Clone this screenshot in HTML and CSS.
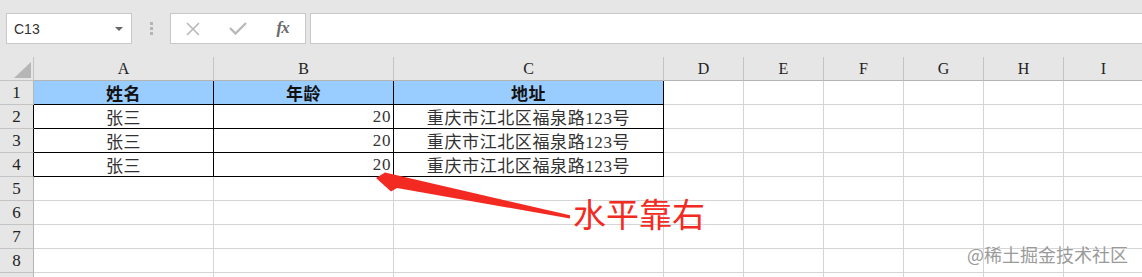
FILE: index.html
```html
<!DOCTYPE html>
<html lang="zh-CN">
<head>
  <meta charset="UTF-8" />
  <title>水平靠右</title>
  <link rel="stylesheet" href="styles.css">
</head>
<body>

  <div class="toolbar">
    <div class="namebox">
      <span>C13</span>
      <span class="caret"></span>
    </div>
    <div class="grip"><i></i><i></i><i></i></div>
    <div class="fx-buttons">
      <span class="btn">
        <svg width="16" height="14" viewBox="0 0 16 14"><path d="M2 1 L14 13 M14 1 L2 13" stroke="#b9b9b9" stroke-width="1.6" fill="none"/></svg>
      </span>
      <span class="btn">
        <svg width="18" height="13" viewBox="0 0 18 13"><path d="M1 6 L6.5 11.5 L17 1" stroke="#b9b9b9" stroke-width="2.4" fill="none"/></svg>
      </span>
      <span class="btn fx">fx</span>
    </div>
    <div class="formula"></div>
  </div>

  <div class="sheet">
    <div class="grid">
      <!-- column headers -->
      <div class="cell corner"><span class="select-all"></span></div>
      <div class="cell colhead">A</div>
      <div class="cell colhead">B</div>
      <div class="cell colhead">C</div>
      <div class="cell colhead">D</div>
      <div class="cell colhead">E</div>
      <div class="cell colhead">F</div>
      <div class="cell colhead">G</div>
      <div class="cell colhead">H</div>
      <div class="cell colhead">I</div>

      <!-- row 1 -->
      <div class="cell rowhead">1</div>
      <div class="cell data title center">姓名</div>
      <div class="cell data title center">年龄</div>
      <div class="cell data title center">地址</div>
      <div class="cell"></div><div class="cell"></div><div class="cell"></div><div class="cell"></div><div class="cell"></div><div class="cell"></div>

      <!-- row 2 -->
      <div class="cell rowhead edge">2</div>
      <div class="cell data center">张三</div>
      <div class="cell data right">20</div>
      <div class="cell data center">重庆市江北区福泉路123号</div>
      <div class="cell"></div><div class="cell"></div><div class="cell"></div><div class="cell"></div><div class="cell"></div><div class="cell"></div>

      <!-- row 3 -->
      <div class="cell rowhead edge">3</div>
      <div class="cell data center">张三</div>
      <div class="cell data right">20</div>
      <div class="cell data center">重庆市江北区福泉路123号</div>
      <div class="cell"></div><div class="cell"></div><div class="cell"></div><div class="cell"></div><div class="cell"></div><div class="cell"></div>

      <!-- row 4 -->
      <div class="cell rowhead edge">4</div>
      <div class="cell data center">张三</div>
      <div class="cell data right">20</div>
      <div class="cell data center">重庆市江北区福泉路123号</div>
      <div class="cell"></div><div class="cell"></div><div class="cell"></div><div class="cell"></div><div class="cell"></div><div class="cell"></div>

      <div class="cell rowhead">5</div>
      <div class="cell"></div><div class="cell"></div><div class="cell"></div><div class="cell"></div><div class="cell"></div><div class="cell"></div><div class="cell"></div><div class="cell"></div><div class="cell"></div>
      <div class="cell rowhead">6</div>
      <div class="cell"></div><div class="cell"></div><div class="cell"></div><div class="cell"></div><div class="cell"></div><div class="cell"></div><div class="cell"></div><div class="cell"></div><div class="cell"></div>
      <div class="cell rowhead">7</div>
      <div class="cell"></div><div class="cell"></div><div class="cell"></div><div class="cell"></div><div class="cell"></div><div class="cell"></div><div class="cell"></div><div class="cell"></div><div class="cell"></div>
      <div class="cell rowhead">8</div>
      <div class="cell"></div><div class="cell"></div><div class="cell"></div><div class="cell"></div><div class="cell"></div><div class="cell"></div><div class="cell"></div><div class="cell"></div><div class="cell"></div>
      <!-- row 9 only peeks in at the bottom edge -->
      <div class="cell rowhead"></div>
      <div class="cell"></div><div class="cell"></div><div class="cell"></div><div class="cell"></div><div class="cell"></div><div class="cell"></div><div class="cell"></div><div class="cell"></div><div class="cell"></div>
    </div>

    <!-- annotation drawn over the sheet -->
    <svg class="callout-arrow" width="200" height="50" viewBox="370 170 200 50">
      <polygon points="376,178 385,172.5 571,215.5 570,218.5 397,188 391,191.5" fill="#f32a22"/>
    </svg>
    <div class="callout-text">水平靠右</div>
    <div class="watermark">@稀土掘金技术社区</div>
  </div>

</body>
</html>
```

FILE: styles.css
```css
* {
  box-sizing: border-box;
}

body {
  margin: 0;
  background-color: #fff;
  font-family: "Liberation Serif", "Noto Sans CJK SC", serif;
  overflow: hidden;
}

/* ---- formula bar ---- */
.toolbar {
  display: flex;
  align-items: flex-start;
  height: 57px;
  padding: 13px 0 0 6px;
  background-color: #e6e6e6;
}

.namebox {
  display: flex;
  align-items: center;
  justify-content: space-between;
  width: 126px;
  height: 31px;
  padding: 0 8px 0 7px;
  background: #fff;
  border: 1px solid #c8c8c8;
  font-family: "Liberation Sans", "Noto Sans CJK SC", sans-serif;
  font-size: 14px;
  color: #333;
}

.caret {
  width: 0;
  height: 0;
  border-left: 4px solid transparent;
  border-right: 4px solid transparent;
  border-top: 4px solid #666;
}

.grip {
  display: flex;
  flex-direction: column;
  gap: 2px;
  margin: 9px 0 0 18px;
}

.grip i {
  display: block;
  width: 3px;
  height: 3px;
  background: #b4b4b4;
}

.fx-buttons {
  display: flex;
  width: 136px;
  height: 31px;
  margin-left: 17px;
  background: #fff;
  border: 1px solid #c8c8c8;
}

.btn {
  flex: 1;
  display: flex;
  align-items: center;
  justify-content: center;
}

.fx {
  font-family: "Liberation Serif", serif;
  font-style: italic;
  font-weight: bold;
  font-size: 17px;
  color: #6a6a6a;
  padding-bottom: 2px;
  letter-spacing: -1px;
}

.formula {
  flex: 1;
  height: 31px;
  margin-left: 4px;
  background: #fff;
  border: 1px solid #c8c8c8;
  border-right: none;
}

/* ---- sheet ---- */
.sheet {
  position: relative;
}

.grid {
  display: grid;
  grid-template-columns: 34px 180px 180px 270px 80px 80px 80px 80px 80px 80px;
  grid-template-rows: 24px;
  grid-auto-rows: 24px;
}

.cell {
  display: flex;
  align-items: center;
  border-right: 1px solid #d4d4d4;
  border-bottom: 1px solid #d4d4d4;
  font-size: 17px;
  color: #222;
  white-space: nowrap;
  overflow: hidden;
}

.corner,
.colhead,
.rowhead {
  background-color: #e6e6e6;
  border-color: #c4c4c4;
  justify-content: center;
  color: #222;
}

.colhead {
  font-size: 16px;
  padding-top: 1px;
  border-bottom-color: #b4b4b4;
}

.rowhead {
  font-size: 17px;
  border-right-color: #b4b4b4;
}

.rowhead.edge {
  border-right-color: #000;
}

.corner {
  align-items: flex-end;
  justify-content: flex-end;
  padding: 0 2px 2px 0;
}

.select-all {
  width: 17px;
  height: 16px;
  background: #b6b6b6;
  clip-path: polygon(100% 0, 100% 100%, 0 100%);
}

.data {
  border-right-color: #000;
  border-bottom-color: #000;
  color: #333;
  letter-spacing: 0.6px;
}

.title {
  background-color: #99ccff;
  font-weight: bold;
  color: #111;
}

.center {
  justify-content: center;
}

.right {
  justify-content: flex-end;
  padding-right: 2px;
}

/* ---- annotation ---- */
.callout-arrow {
  position: absolute;
  left: 370px;
  top: 113px;
}

.callout-text {
  position: absolute;
  left: 573px;
  top: 136px;
  font-family: "Noto Sans CJK SC", sans-serif;
  font-size: 33px;
  line-height: 40px;
  color: #f32a22;
}

.watermark {
  position: absolute;
  left: 967px;
  top: 185px;
  font-family: "Noto Sans CJK SC", sans-serif;
  font-size: 18px;
  line-height: 24px;
  color: #9a9a9a;
  text-shadow: 0 0 2px #fff;
}
```
